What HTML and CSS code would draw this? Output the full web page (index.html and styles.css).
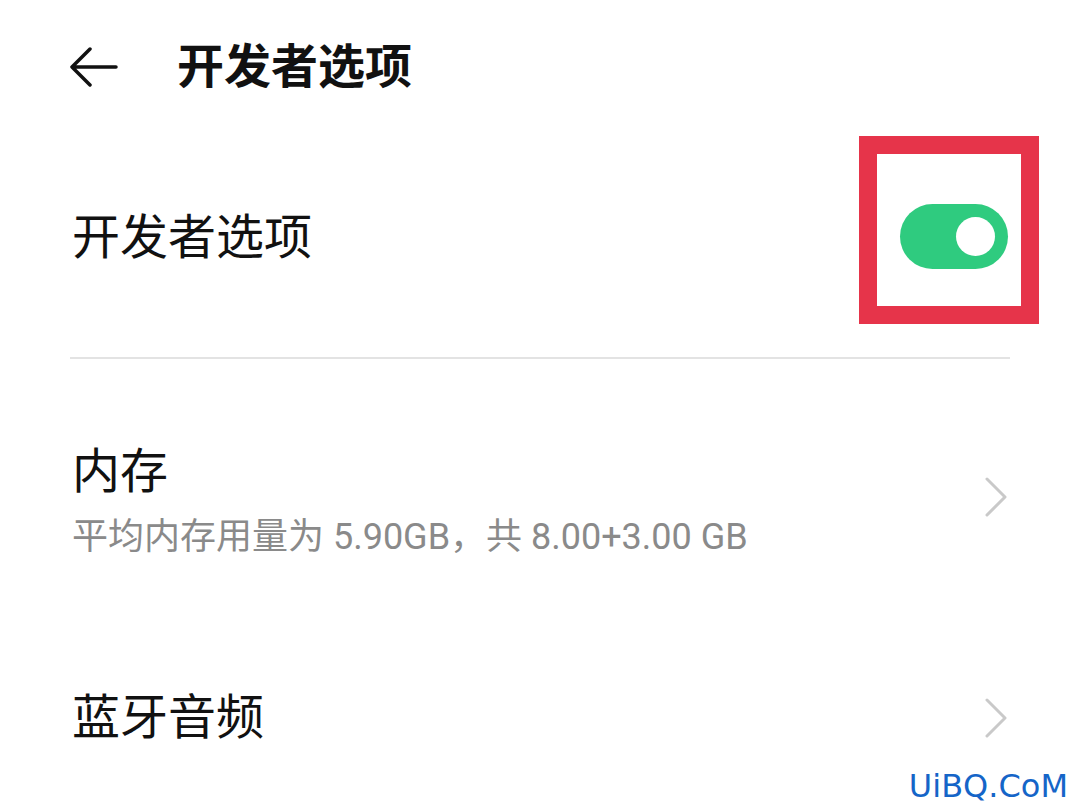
FILE: index.html
```html
<!DOCTYPE html>
<html lang="zh-CN">
<head>
  <meta charset="UTF-8">
  <meta name="viewport" content="width=device-width, initial-scale=1.0">
  <title>开发者选项</title>
  <link rel="stylesheet" href="styles.css">
</head>
<body>
  <div class="page">
    <header class="header">
      <svg class="back" width="48" height="40" viewBox="0 0 48 40">
        <path d="M46 20 H3 M20 2 L2 20 L20 38" fill="none" stroke="#111" stroke-width="3.5" stroke-linecap="round" stroke-linejoin="round"/>
      </svg>
      <h1 class="title">开发者选项</h1>
    </header>

    <div class="row row-switch">
      <span class="row-title">开发者选项</span>
      <div class="switch on"><span class="knob"></span></div>
    </div>

    <div class="divider"></div>

    <div class="row row-memory">
      <div class="row-text">
        <span class="row-title">内存</span>
        <span class="row-sub">平均内存用量为 5.90GB，共 8.00+3.00 GB</span>
      </div>
      <svg class="chevron chevron-up" width="24" height="40" viewBox="0 0 24 40">
        <path d="M3 2 L21 20 L3 38" fill="none" stroke="#c9c9c9" stroke-width="3" stroke-linecap="round" stroke-linejoin="round"/>
      </svg>
    </div>

    <div class="row row-bt">
      <span class="row-title">蓝牙音频</span>
      <svg class="chevron" width="24" height="40" viewBox="0 0 24 40">
        <path d="M3 2 L21 20 L3 38" fill="none" stroke="#c9c9c9" stroke-width="3" stroke-linecap="round" stroke-linejoin="round"/>
      </svg>
    </div>

    <!-- annotation box round the switch -->
    <div class="mark"></div>
    <div class="watermark">UiBQ.CoM</div>
  </div>
</body>
</html>
```

FILE: styles.css
```css
* {
  margin: 0;
  padding: 0;
  box-sizing: border-box;
}

body {
  font-family: Roboto, "Noto Sans CJK SC", sans-serif;
  background: #fff;
  color: #111;
}

.page {
  position: relative;
  width: 1080px;
  height: 810px;
  overflow: hidden;
}

.header {
  height: 136px;
  display: flex;
  align-items: center;
  padding-left: 70px;
  gap: 59px;
}

.back {
  display: block;
  margin-top: -2px;
}

.title {
  font-size: 47px;
  font-weight: 600;
  line-height: 1;
  margin-top: -4px;
}

.row {
  display: flex;
  align-items: center;
  justify-content: space-between;
  padding: 0 72px 0 72px;
}

.row-title {
  font-size: 48px;
  line-height: 56px;
  font-weight: 400;
}

.row-switch {
  height: 204px;
}

.switch {
  width: 108px;
  height: 65px;
  border-radius: 33px;
  background: #2fcb7f;
  display: flex;
  align-items: center;
  justify-content: flex-end;
  padding-right: 13px;
  margin-top: -4px;
}

.knob {
  width: 39px;
  height: 39px;
  border-radius: 50%;
  background: #fff;
}

.divider {
  height: 2px;
  background: #e3e3e3;
  margin: 17px 70px 0 70px;
}

.row-memory {
  height: 285px;
}

.row-text {
  display: flex;
  flex-direction: column;
}

.row-sub {
  font-size: 36px;
  line-height: 46px;
  color: #8a8a8a;
  margin-top: 14px;
}

.chevron {
  display: block;
}

.chevron-up {
  margin-top: -10px;
}

.row-bt {
  height: 148px;
}

.mark {
  position: absolute;
  left: 859px;
  top: 136px;
  width: 180px;
  height: 188px;
  border: 18px solid #e6344a;
}

.watermark {
  position: absolute;
  right: 12px;
  bottom: 5px;
  font-family: "DejaVu Sans", sans-serif;
  font-size: 32px;
  color: #1565c8;
}
```
